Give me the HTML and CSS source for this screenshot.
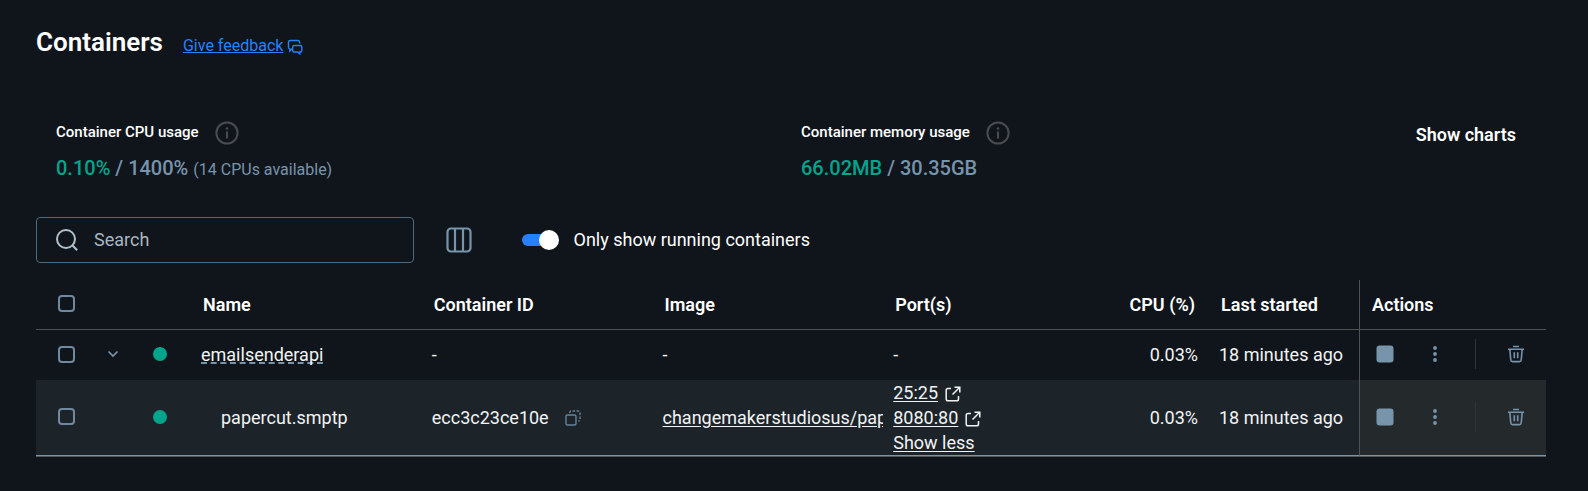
FILE: index.html
```html
<!DOCTYPE html>
<html lang="en">
<head>
<meta charset="utf-8">
<title>Containers</title>
<link rel="stylesheet" href="styles.css">
</head>
<body>
<svg class="sprite" aria-hidden="true">
  <symbol id="info" viewBox="0 0 24 24"><circle cx="12" cy="12" r="10.6" fill="none" stroke="currentColor" stroke-width="2"/><path d="M12 10.500v7" fill="none" stroke="currentColor" stroke-width="2"/><circle cx="12" cy="7.500" r="1.300" fill="currentColor"/></symbol>
  <symbol id="external" viewBox="0 0 16 16"><path d="M6 2.500H3A1.800 1.800 0 0 0 1.200 4.300V13A1.800 1.800 0 0 0 3 14.800H11.700A1.800 1.800 0 0 0 13.500 13V10M9.500 1.200H14.800V6.500M14.500 1.500L7.500 8.500" fill="none" stroke="currentColor" stroke-width="1.500"/></symbol>
  <symbol id="trash" viewBox="0 0 18 18"><path d="M6 1.500h6M1 4.300h16M2.800 4.300l1 10.700a1.800 1.800 0 0 0 1.800 1.600h6.800a1.800 1.800 0 0 0 1.800-1.600l1-10.700M7.300 7.200v6M10.700 7.200v6" fill="none" stroke="currentColor" stroke-width="1.600"/></symbol>
  <symbol id="stop" viewBox="0 0 18 18"><rect x="0.500" y="0.500" width="17" height="17" rx="3" fill="currentColor"/></symbol>
  <symbol id="kebab" viewBox="0 0 18 18"><circle cx="9" cy="3" r="1.900" fill="currentColor"/><circle cx="9" cy="9" r="1.900" fill="currentColor"/><circle cx="9" cy="15" r="1.900" fill="currentColor"/></symbol>
</svg>
<main class="page">
  <header class="page-header">
    <h1 class="title">Containers</h1>
    <a class="feedback" href="#feedback"><span class="feedback-text">Give feedback</span>
      <svg class="feedback-icon" viewBox="0 0 16 16" fill="none" stroke="currentColor" stroke-width="1.400"><path d="M5.500 10H4.800L2.800 12V9.800A1.800 1.800 0 0 1 1.500 8.200V3.200A1.800 1.800 0 0 1 3.300 1.500H11A1.800 1.800 0 0 1 12.700 3.200V4.500"/><path d="M7.200 6.500H13.300A1.500 1.500 0 0 1 14.800 8V11.500A1.500 1.500 0 0 1 13.300 13H12.800V14.800L10.800 13H7.200A1.500 1.500 0 0 1 5.700 11.500V8A1.500 1.500 0 0 1 7.200 6.500Z"/></svg>
    </a>
  </header>

  <section class="stats">
    <div class="stat">
      <div class="stat-label">Container CPU usage <svg class="info"><use href="#info"/></svg></div>
      <div class="stat-value"><span class="used">0.10%</span> / 1400% <span class="note">(14 CPUs available)</span></div>
    </div>
    <div class="stat-end">
      <div class="stat">
        <div class="stat-label">Container memory usage <svg class="info"><use href="#info"/></svg></div>
        <div class="stat-value"><span class="used">66.02MB</span> / 30.35GB</div>
      </div>
      <button class="charts" type="button">Show charts</button>
    </div>
  </section>

  <section class="toolbar">
    <label class="search">
      <svg class="search-icon" viewBox="0 0 22 22" fill="none" stroke="currentColor" stroke-width="2"><circle cx="10" cy="10" r="9"/><path d="M16.300 16.300L21.200 21.200"/></svg>
      <input class="search-input" type="text" placeholder="Search" aria-label="Search">
    </label>
    <button class="columns" type="button" aria-label="Columns">
      <svg class="columns-icon" viewBox="0 0 26 26" fill="none" stroke="currentColor" stroke-width="2.200"><rect x="1.500" y="1.500" width="23" height="23" rx="3.500"/><path d="M9 2v22M17 2v22"/></svg>
    </button>
    <label class="running"><input class="switch" type="checkbox" role="switch" checked><span class="running-text">Only show running containers</span></label>
  </section>

  <table class="containers">
    <colgroup><col class="col-check"><col class="col-expand"><col class="col-status"><col><col><col><col><col class="col-cpu"><col class="col-started"><col class="col-actions"></colgroup>
    <thead>
      <tr>
        <th class="center"><input class="check" type="checkbox" aria-label="Select all"></th>
        <th></th><th></th>
        <th>Name</th><th>Container ID</th><th>Image</th><th>Port(s)</th>
        <th class="number">CPU (%)</th><th>Last started</th><th class="actions-cell">Actions</th>
      </tr>
    </thead>
    <tbody>
      <tr class="group-row">
        <td class="center"><input class="check" type="checkbox" aria-label="Select emailsenderapi"></td>
        <td class="center"><button class="expand" type="button" aria-label="Collapse"><svg class="chevron" viewBox="0 0 12 8" fill="none" stroke="currentColor" stroke-width="1.700"><path d="M1.500 1.500L6 6L10.500 1.500"/></svg></button></td>
        <td class="center"><span class="dot"></span></td>
        <td><a class="group-name" href="#emailsenderapi">emailsenderapi</a></td>
        <td>-</td><td>-</td><td>-</td>
        <td class="number">0.03%</td><td>18 minutes ago</td>
        <td class="actions-cell"><div class="actions">
          <button class="action" type="button" aria-label="Stop"><svg class="icon"><use href="#stop"/></svg></button>
          <button class="action" type="button" aria-label="More"><svg class="icon"><use href="#kebab"/></svg></button>
          <span class="divider"></span>
          <button class="action" type="button" aria-label="Delete"><svg class="icon"><use href="#trash"/></svg></button>
        </div></td>
      </tr>
      <tr class="child-row">
        <td class="center"><input class="check" type="checkbox" aria-label="Select papercut.smptp"></td>
        <td></td>
        <td class="center"><span class="dot"></span></td>
        <td class="child-name">papercut.smptp</td>
        <td><div class="container-id">ecc3c23ce10e <button class="copy" type="button" aria-label="Copy"><svg class="copy-icon" viewBox="0 0 16 16" fill="none" stroke="currentColor" stroke-width="1.400"><rect x="1" y="5" width="10" height="10" rx="1.500"/><path d="M4.700 3V2.500A1.500 1.500 0 0 1 6.200 1H13.500A1.500 1.500 0 0 1 15 2.500V9.500A1.500 1.500 0 0 1 13.500 11" stroke-dasharray="2.500 1.500"/></svg></button></div></td>
        <td class="image-cell"><a class="link" href="#image">changemakerstudiosus/pap</a></td>
        <td><div class="ports">
          <a class="port" href="#25"><span class="link">25:25</span><svg class="external"><use href="#external"/></svg></a>
          <a class="port" href="#8080"><span class="link">8080:80</span><svg class="external"><use href="#external"/></svg></a>
          <button class="less link" type="button">Show less</button>
        </div></td>
        <td class="number">0.03%</td><td>18 minutes ago</td>
        <td class="actions-cell"><div class="actions">
          <button class="action" type="button" aria-label="Stop"><svg class="icon"><use href="#stop"/></svg></button>
          <button class="action" type="button" aria-label="More"><svg class="icon"><use href="#kebab"/></svg></button>
          <span class="divider"></span>
          <button class="action" type="button" aria-label="Delete"><svg class="icon"><use href="#trash"/></svg></button>
        </div></td>
      </tr>
    </tbody>
  </table>
</main>
</body>
</html>
```
FILE: styles.css
```css
* { box-sizing: border-box; }
body {
  margin: 0;
  background: #10151b;
  color: #fff;
  font: 18px/25px Roboto, "Liberation Sans", sans-serif;
}
button, input { font: inherit; color: inherit; }
button { padding: 0; border: 0; background: none; cursor: pointer; }
a { color: inherit; }
svg { display: block; flex: none; }
.sprite { position: absolute; width: 0; height: 0; }
.page { padding: 24px 42px 32px 36px; }

.page-header { display: flex; align-items: baseline; gap: 20px; }
.title { margin: 0; font-size: 26px; line-height: 36px; font-weight: 600; }
.feedback { display: flex; align-items: center; gap: 4px; color: #2681ff; font-size: 16px; text-decoration: none; }
.feedback-text { text-decoration: underline; }
.feedback-icon { width: 16px; height: 16px; margin-top: 3px; }

.stats { display: grid; grid-template-columns: 1fr 1fr; margin-top: 60px; padding-left: 20px; }
.stat-label { display: flex; align-items: center; gap: 16px; font-size: 15px; font-weight: 500; }
.info { width: 24px; height: 24px; color: #494c4f; }
.stat-value { margin-top: 11px; color: #7794ab; font-size: 20px; font-weight: 500; }
.used { color: #00a58c; }
.note { font-size: 16px; font-weight: 400; }
.stat-end { display: flex; justify-content: space-between; align-items: flex-start; }
.charts { margin-right: 20px; padding: 2px 10px; font-weight: 600; }

.toolbar { display: flex; align-items: center; margin-top: 35px; }
.search { display: flex; align-items: center; gap: 16px; width: 25%; height: 46px; padding: 0 19px; border: 1px solid #4b6a80; border-radius: 4px; color: #b0bfcc; }
.search-icon { width: 22px; height: 22px; }
.search-input { flex: 1; min-width: 0; padding: 0 0 2px; border: 0; outline: 0; background: none; }
.search-input::placeholder { color: #a9b6c2; opacity: 1; }
.columns { margin-left: 32px; color: #7794ab; }
.columns-icon { width: 26px; height: 26px; }
.running { display: flex; align-items: center; gap: 15px; margin-left: 50px; }
.running-text { padding-bottom: 2px; }
.switch { appearance: none; display: flex; align-items: center; justify-content: flex-end; width: 37px; height: 20px; margin: 0; }
.switch::before { content: ""; width: 17px; height: 12px; border-radius: 6px 0 0 6px; background: #2681ff; box-shadow: 6px 0 #2681ff; }
.switch::after { content: ""; position: relative; width: 20px; height: 20px; border-radius: 50%; background: #fff; }

.containers { width: 100%; margin-top: 17px; table-layout: fixed; border-spacing: 0; border-bottom: 1px solid #54585b; }
.col-check { width: 61px; }
.col-expand { width: 32px; }
.col-status { width: 62px; }
.col-cpu { width: 95px; }
.col-started { width: 150px; }
.col-actions { width: 187px; }
th { height: 50px; padding: 0 12px; border-bottom: 1px solid #505254; font-weight: 600; text-align: left; white-space: nowrap; }
td { padding: 0 0 0 10px; white-space: nowrap; color: #f2f3f4; }
.group-row { height: 50px; }
.group-row td { padding-bottom: 2px; }
.child-row td { background: #1c242a; border-bottom: 1px solid #7794ab; }
.containers .center { padding: 0 0 2px; text-align: center; }
th.number { padding-right: 14px; text-align: right; }
td.number { padding-right: 11px; text-align: right; }
.actions-cell { border-left: 1px solid #505254; }
td.actions-cell { padding: 0 0 2px; }
.child-row .actions-cell { background: #24292c; }
.check { appearance: none; display: block; width: 17px; height: 17px; margin: 0 auto; border: 2px solid #7089a0; border-radius: 4px; }
.expand { display: block; margin: 0 auto; color: #7794ab; }
.chevron { width: 12px; height: 8px; }
.dot { display: block; width: 14px; height: 14px; margin: 0 auto; border-radius: 50%; background: #00a58c; }
.group-name { text-decoration: underline dashed 2px #7794ab; text-underline-offset: 2px; text-decoration-skip-ink: none; }
td.child-name { padding-left: 30px; }
.container-id { display: flex; align-items: center; gap: 16px; }
.copy { color: #66829a; }
.copy-icon { width: 16px; height: 16px; }
.image-cell { overflow: hidden; }
.link { text-decoration: underline; text-underline-offset: 2px; }
.ports { display: flex; flex-direction: column; align-items: flex-start; }
.port { display: flex; align-items: center; gap: 7px; text-decoration: none; }
.external { width: 16px; height: 16px; margin-top: 3px; }
.actions { display: flex; align-items: center; }
.action { display: grid; place-items: center; width: 50px; height: 30px; color: #7794ab; }
.icon { width: 18px; height: 18px; }
.divider { width: 1px; height: 30px; margin: 0 15px; background: #2f3336; }
```
